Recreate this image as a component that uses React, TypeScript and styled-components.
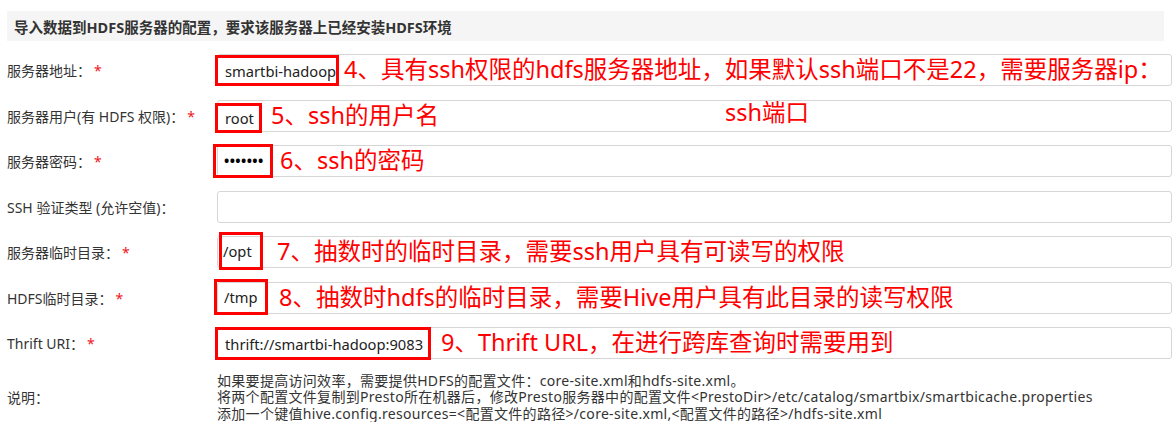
import React from "react";
import styled, { createGlobalStyle } from "styled-components";

const Global = createGlobalStyle`
  html, body { margin: 0; padding: 0; background: #fff; }
  body { font-family: "Noto Sans", "Noto Sans CJK SC", sans-serif; color: #333; }
`;

const Page = styled.div`
  padding: 11px 0 0 7px;
  width: 1167px;
  box-sizing: border-box;
`;

const Header = styled.div`
  height: 30px;
  width: 1157px;
  background: #f5f5f5;
  display: flex;
  align-items: center;
  padding-left: 7px;
  box-sizing: border-box;
  font-size: 14.5px;
  font-weight: 700;
  color: #333;
  margin-bottom: 13px;
`;

const Form = styled.div`
  display: flex;
  flex-direction: column;
  gap: 13.5px;
`;

const Row = styled.div`
  display: grid;
  grid-template-columns: 210px 955px;
  align-items: center;
  min-height: 32px;
`;

const Label = styled.div`
  font-size: 14px;
  color: #333;
  white-space: nowrap;
`;

const Star = styled.span`
  color: #f0141e;
  margin-left: 3px;
`;

const Field = styled.div`
  position: relative;
  height: 32px;
  box-sizing: border-box;
  border: 1px solid #d6d6d6;
  border-radius: 3px;
  display: flex;
  align-items: center;
  white-space: nowrap;
`;

const Marked = styled.div<{ $w: number; $pl: number; $ml: number; $mt: number; $mb: number }>`
  box-sizing: border-box;
  align-self: stretch;
  width: ${(p) => p.$w}px;
  margin: ${(p) => p.$mt}px 0 ${(p) => p.$mb}px ${(p) => p.$ml}px;
  padding-left: ${(p) => p.$pl}px;
  border: 3px solid #f00;
  display: flex;
  align-items: center;
  font-size: 14.7px;
  color: #222;
  flex: none;
`;

const Dots = styled.span`
  font-size: 14px;
  letter-spacing: 0.4px;
  color: #000;
  font-weight: 700;
`;

const Note = styled.span<{ $gap: number }>`
  margin-left: ${(p) => p.$gap}px;
  font-size: 23.5px;
  line-height: 1;
  color: #f00;
`;

const FloatNote = styled.span`
  position: absolute;
  left: 507px;
  top: 41px;
  font-size: 23.5px;
  line-height: 32px;
  color: #f00;
`;

const Desc = styled.div`
  display: flex;
  flex-direction: column;
  font-size: 14px;
  letter-spacing: 0.3px;
  color: #333;
  white-space: nowrap;
`;

const DescLine = styled.div`
  height: 16.5px;
  line-height: 16.5px;
`;

type RowData = {
  label: string;
  required: boolean;
  value?: string;
  password?: boolean;
  note?: string;
  box?: { w: number; pl: number; ml: number; mt: number; mb: number; gap: number };
  extra?: string;
};

const rows: RowData[] = [
  {
    label: "服务器地址：",
    required: true,
    value: "smartbi-hadoop",
    note: "4、具有ssh权限的hdfs服务器地址，如果默认ssh端口不是22，需要服务器ip：",
    box: { w: 124, pl: 7, ml: -3, mt: 0, mb: -1, gap: 5 },
    extra: "ssh端口",
  },
  {
    label: "服务器用户(有 HDFS 权限)：",
    required: true,
    value: "root",
    note: "5、ssh的用户名",
    box: { w: 47, pl: 7, ml: -3, mt: 2, mb: -2, gap: 9 },
  },
  {
    label: "服务器密码：",
    required: true,
    password: true,
    value: "•••••••",
    note: "6、ssh的密码",
    box: { w: 60, pl: 8, ml: -5, mt: -2.5, mb: -1.5, gap: 7 },
  },
  { label: "SSH 验证类型 (允许空值)：", required: false },
  {
    label: "服务器临时目录：",
    required: true,
    value: "/opt",
    note: "7、抽数时的临时目录，需要ssh用户具有可读写的权限",
    box: { w: 44, pl: 1, ml: 1, mt: -5, mb: -3, gap: 14 },
  },
  {
    label: "HDFS临时目录：",
    required: true,
    value: "/tmp",
    note: "8、抽数时hdfs的临时目录，需要Hive用户具有此目录的读写权限",
    box: { w: 54, pl: 7, ml: -4, mt: -3.5, mb: -2.5, gap: 11 },
  },
  {
    label: "Thrift URI：",
    required: true,
    value: "thrift://smartbi-hadoop:9083",
    note: "9、Thrift URL，在进行跨库查询时需要用到",
    box: { w: 216, pl: 7, ml: -3, mt: -1, mb: -2, gap: 10 },
  },
];

const descLines = [
  "如果要提高访问效率，需要提供HDFS的配置文件：core-site.xml和hdfs-site.xml。",
  "将两个配置文件复制到Presto所在机器后，修改Presto服务器中的配置文件<PrestoDir>/etc/catalog/smartbix/smartbicache.properties",
  "添加一个键值hive.config.resources=<配置文件的路径>/core-site.xml,<配置文件的路径>/hdfs-site.xml",
];

export default function App() {
  return (
    <>
      <Global />
      <Page>
        <Header>导入数据到HDFS服务器的配置，要求该服务器上已经安装HDFS环境</Header>
        <Form>
          {rows.map((r) => (
            <Row key={r.label}>
              <Label>
                {r.label}
                {r.required && <Star>*</Star>}
              </Label>
              <Field>
                {r.box && (
                  <>
                    <Marked $w={r.box.w} $pl={r.box.pl} $ml={r.box.ml} $mt={r.box.mt} $mb={r.box.mb}>
                      {r.password ? <Dots>{r.value}</Dots> : r.value}
                    </Marked>
                    <Note $gap={r.box.gap}>{r.note}</Note>
                  </>
                )}
                {r.extra && <FloatNote>{r.extra}</FloatNote>}
              </Field>
            </Row>
          ))}
          <Row>
            <Label>说明：</Label>
            <Desc>
              {descLines.map((l) => (
                <DescLine key={l}>{l}</DescLine>
              ))}
            </Desc>
          </Row>
        </Form>
      </Page>
    </>
  );
}
